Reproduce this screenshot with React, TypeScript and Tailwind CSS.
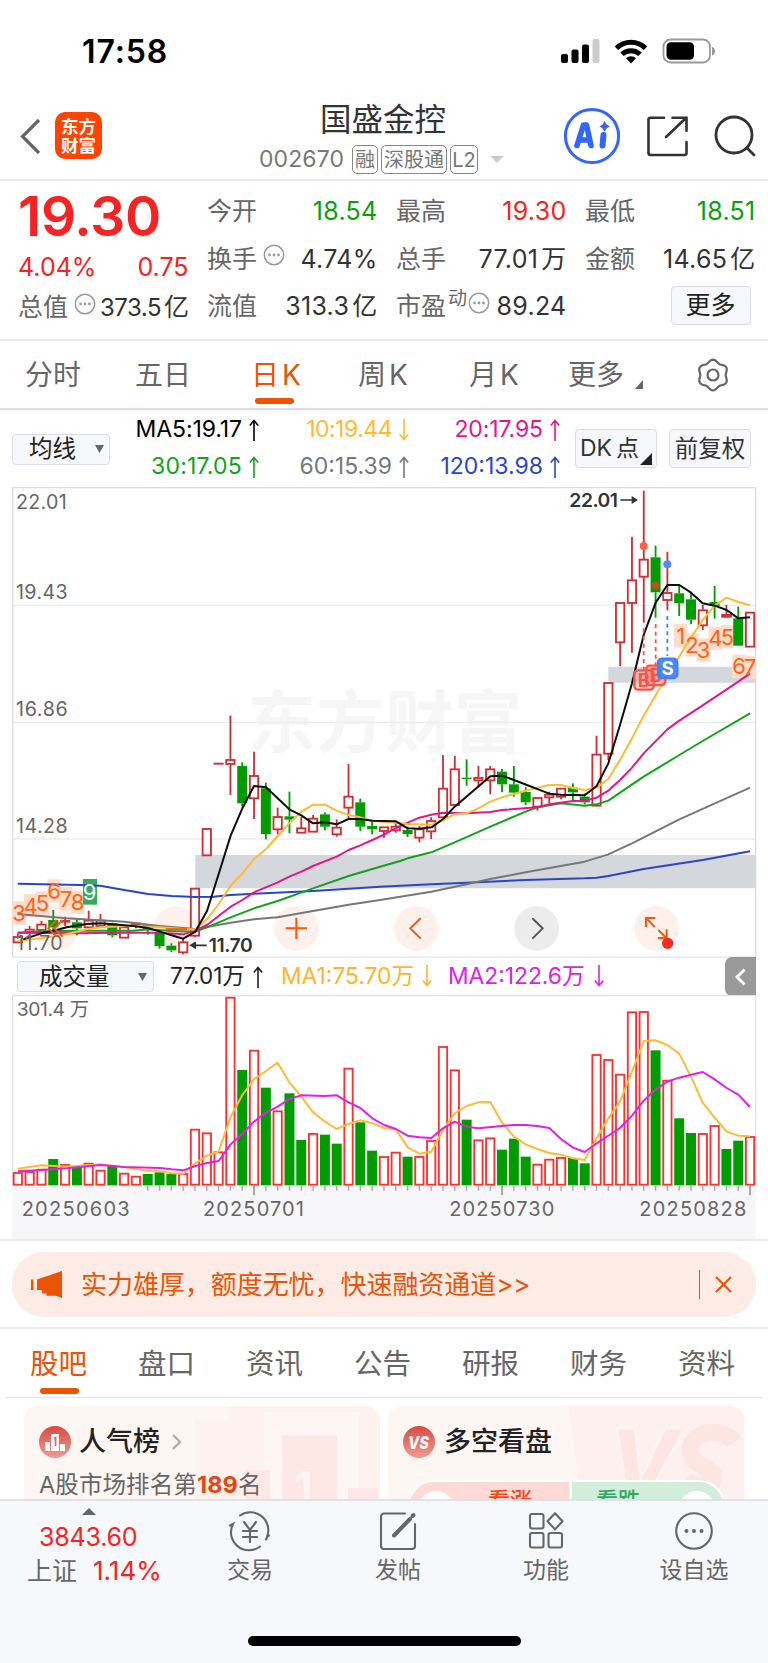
import type { ReactNode } from "react";

type Dir = "r" | "g";
type Pt = [number, number];
// direction, high, body top, body bottom, low
type Candle = [Dir, number, number, number, number];

const RED = "#cf2f33";
const GREEN = "#009c00";

// All chart coordinates are in thirds of a pixel.
const FIRST_X = 53.5;
const STEP = 35.43;
const cx = (i: number) => FIRST_X + i * STEP;

const CANDLES: Candle[] = [
  ["r", 700, 710, 727, 727], ["r", 678, 688, 697, 712], ["r", 663, 673, 690, 690], ["g", 630, 660, 682, 690],
  ["r", 650, 662, 665, 678], ["g", 660, 667, 685, 706], ["r", 632, 661, 682, 688], ["r", 642, 661, 678, 680],
  ["g", 668, 670, 706, 712], ["r", 681, 681, 713, 713], ["r", 668, 670, 673, 685], ["g", 672, 675, 690, 704],
  ["g", 697, 697, 738, 746], ["g", 730, 737, 751, 756], ["r", 715, 726, 757, 763], ["r", 565, 565, 707, 712],
  ["r", 386, 386, 466, 466], ["r", 190, 190, 191, 191], ["r", 47, 179, 192, 285], ["g", 187, 198, 310, 318],
  ["r", 155, 227, 295, 357], ["g", 248, 265, 402, 418], ["r", 323, 350, 388, 403], ["g", 275, 349, 359, 400],
  ["r", 350, 384, 398, 398], ["r", 345, 355, 395, 395], ["g", 337, 343, 380, 391], ["r", 358, 382, 403, 410],
  ["r", 192, 289, 323, 355], ["g", 296, 307, 380, 393], ["g", 365, 378, 388, 403], ["r", 381, 381, 393, 413],
  ["r", 370, 379, 391, 398], ["g", 380, 390, 402, 411], ["r", 378, 387, 413, 427], ["r", 352, 362, 394, 417],
  ["r", 165, 265, 352, 352], ["r", 168, 207, 315, 315], ["g", 178, 233, 237, 257], ["r", 198, 233, 241, 262],
  ["r", 198, 207, 241, 283], ["g", 207, 215, 253, 277], ["g", 198, 253, 278, 290], ["g", 262, 276, 307, 315],
  ["r", 293, 293, 320, 332], ["r", 275, 283, 292, 310], ["r", 265, 265, 290, 298], ["g", 250, 263, 277, 303],
  ["g", 280, 290, 307, 313], ["r", 107, 163, 317, 317], ["r", -52, -52, 161, 180], ["r", -292, -292, -173, -102],
  ["r", -490, -360, -291, -142], ["r", -628, -422, -370, -232], ["g", -463, -428, -323, -247],
  ["r", -445, -322, -300, -269], ["g", -342, -320, -290, -252], ["g", -320, -302, -241, -227],
  ["r", -285, -270, -224, -210], ["g", -342, -294, -282, -244], ["r", -285, -256, -250, -250],
  ["g", -280, -245, -163, -163], ["r", -263, -263, -160, -160],
];

const MA: { color: string; pts: Pt[] }[] = [
  {
    color: "#2b45c8",
    pts: [[53, 551], [240, 555], [300, 557], [373, 570], [444, 582], [515, 588], [586, 591], [640, 590], [692, 585], [762, 581], [939, 573], [1046, 566], [1140, 560], [1294, 553], [1400, 548], [1577, 540], [1754, 535], [1790, 533], [1825, 528], [1931, 507], [2108, 480], [2250, 454]],
  },
  {
    color: "#777",
    pts: [[53, 642], [200, 655], [373, 665], [479, 678], [586, 687], [692, 668], [762, 658], [833, 652], [939, 633], [1046, 614], [1140, 600], [1294, 575], [1400, 553], [1471, 537], [1577, 517], [1754, 485], [1825, 463], [1896, 430], [2038, 358], [2250, 263]],
  },
  {
    color: "#12a31a",
    pts: [[53, 698], [124, 694], [260, 692], [400, 692], [444, 688], [515, 693], [586, 695], [621, 682], [692, 652], [762, 625], [833, 603], [939, 565], [1046, 528], [1117, 507], [1200, 483], [1223, 475], [1294, 457], [1364, 427], [1471, 380], [1577, 335], [1612, 322], [1683, 310], [1754, 317], [1790, 313], [1825, 302], [1931, 230], [2038, 165], [2108, 123], [2250, 40]],
  },
  {
    color: "#e3168c",
    pts: [[53, 698], [240, 700], [340, 698], [480, 698], [550, 703], [586, 692], [621, 675], [656, 648], [692, 620], [727, 600], [762, 577], [833, 547], [868, 530], [904, 515], [939, 498], [1010, 470], [1046, 450], [1081, 436], [1117, 420], [1152, 404], [1188, 384], [1223, 368], [1258, 353], [1294, 344], [1329, 338], [1400, 340], [1471, 336], [1506, 330], [1612, 322], [1648, 313], [1719, 303], [1754, 302], [1790, 293], [1825, 272], [1860, 240], [1896, 203], [1931, 160], [2002, 88], [2038, 62], [2108, 16], [2215, -55], [2250, -80]],
  },
  {
    color: "#ffbb33",
    pts: [[53, 722], [124, 715], [200, 703], [260, 688], [302, 682], [400, 677], [479, 682], [550, 687], [586, 688], [621, 658], [656, 612], [692, 557], [727, 520], [762, 477], [798, 447], [833, 408], [868, 370], [904, 335], [939, 314], [975, 314], [1010, 332], [1046, 345], [1081, 352], [1117, 363], [1188, 368], [1223, 372], [1295, 374], [1329, 362], [1364, 342], [1400, 340], [1435, 325], [1471, 305], [1506, 292], [1577, 272], [1612, 263], [1648, 255], [1683, 255], [1719, 264], [1754, 270], [1790, 263], [1825, 237], [1860, 180], [1896, 115], [1925, 58], [1985, -45], [2020, -100], [2055, -160], [2108, -240], [2144, -283], [2180, -307], [2215, -294], [2250, -284]],
  },
  {
    color: "#0d0d0d",
    pts: [[70, 718], [124, 700], [170, 690], [200, 682], [260, 672], [302, 670], [337, 673], [400, 678], [440, 683], [480, 695], [515, 706], [550, 716], [586, 695], [621, 633], [656, 522], [692, 407], [727, 325], [762, 258], [798, 262], [833, 295], [868, 328], [904, 346], [939, 370], [975, 367], [1010, 373], [1046, 357], [1081, 357], [1117, 362], [1188, 364], [1223, 385], [1258, 386], [1295, 382], [1329, 357], [1364, 320], [1471, 229], [1506, 227], [1542, 240], [1648, 281], [1683, 284], [1754, 286], [1790, 258], [1825, 190], [1860, 75], [1896, -50], [1931, -195], [1967, -292], [2002, -345], [2038, -345], [2073, -322], [2108, -290], [2144, -283], [2180, -270], [2215, -245], [2250, -248]],
  },
];

const VOLUMES: [Dir, number][] = [
  ["r", 667], ["r", 664], ["r", 657], ["g", 627], ["r", 643], ["g", 650], ["r", 639], ["r", 660], ["g", 645],
  ["r", 669], ["r", 678], ["g", 672], ["g", 667], ["g", 672], ["r", 670], ["r", 537], ["r", 548], ["r", 605],
  ["r", 141], ["g", 360], ["r", 300], ["g", 413], ["r", 482], ["g", 430], ["g", 570], ["r", 550], ["g", 554],
  ["g", 581], ["r", 354], ["g", 517], ["g", 602], ["r", 619], ["r", 606], ["g", 620], ["r", 619], ["r", 571],
  ["r", 289], ["r", 359], ["g", 509], ["r", 569], ["r", 563], ["g", 599], ["g", 566], ["g", 620], ["r", 642],
  ["r", 627], ["r", 622], ["g", 624], ["g", 640], ["r", 313], ["r", 328], ["r", 372], ["r", 185], ["r", 184],
  ["g", 301], ["r", 390], ["g", 505], ["g", 549], ["r", 550], ["r", 526], ["g", 597], ["g", 572], ["r", 559],
];

const VOL_MA1: Pt[] = [[53, 656], [124, 646], [200, 650], [302, 643], [373, 652], [444, 662], [480, 664], [515, 670], [550, 671], [586, 640], [621, 617], [656, 605], [692, 500], [727, 435], [762, 388], [798, 363], [833, 338], [868, 397], [904, 440], [939, 487], [975, 515], [1010, 537], [1046, 522], [1081, 511], [1117, 520], [1152, 534], [1188, 539], [1223, 592], [1258, 611], [1294, 605], [1329, 540], [1364, 490], [1400, 468], [1435, 457], [1471, 456], [1506, 518], [1542, 560], [1577, 583], [1612, 597], [1648, 609], [1683, 614], [1719, 625], [1754, 630], [1790, 565], [1825, 505], [1860, 455], [1896, 365], [1931, 273], [1967, 271], [2002, 285], [2037, 310], [2073, 380], [2108, 458], [2144, 503], [2180, 545], [2215, 557], [2250, 559]];
const VOL_MA2: Pt[] = [[53, 664], [124, 660], [200, 655], [302, 645], [373, 651], [480, 654], [515, 658], [550, 661], [586, 648], [621, 639], [656, 633], [692, 583], [727, 552], [762, 515], [798, 488], [833, 470], [868, 447], [904, 436], [975, 438], [1010, 436], [1046, 457], [1081, 474], [1117, 505], [1152, 525], [1188, 537], [1223, 557], [1258, 562], [1294, 564], [1329, 535], [1364, 515], [1400, 530], [1435, 535], [1506, 528], [1542, 525], [1577, 525], [1612, 528], [1648, 534], [1683, 567], [1719, 593], [1754, 606], [1790, 580], [1860, 534], [1896, 497], [1931, 452], [1967, 418], [2002, 395], [2037, 383], [2108, 366], [2144, 388], [2180, 414], [2215, 434], [2250, 471]];

// nine-turn counters: digit, centre x, centre y
const TURNS: [string, number, number][] = [
  ["3", 57, 639], ["4", 92, 617], ["5", 127, 609], ["6", 162, 573], ["7", 198, 596], ["8", 233, 607],
  ["1", 2042, -193], ["2", 2076, -165], ["3", 2111, -150], ["4", 2146, -185], ["5", 2182, -190],
  ["6", 2217, -101], ["7", 2250, -98],
];

const line = (pts: Pt[]) => pts.map((p) => p.join(",")).join(" ");

// six-lobed outline of the settings icon
const GEAR = line(
  Array.from({ length: 72 }, (_, i): Pt => {
    const a = (i * Math.PI) / 36;
    const r = 14 - 1.3 * Math.cos(6 * a);
    return [17 + r * Math.cos(a), 17 + r * Math.sin(a)];
  }),
);

function StatusBar() {
  return (
    <div className="flex h-[90px] items-start justify-between pl-[82px] pr-[52px] pt-[38px]">
      <span className="text-[32px] leading-[28px] font-semibold tracking-[0.900px] text-black">17:58</span>
      <svg className="h-[26px] w-[156px]" viewBox="0 0 156 26">
        <rect x="1" y="16" width="7" height="9" rx="2" />
        <rect x="11.5" y="11.500" width="7" height="13.500" rx="2" />
        <rect x="22" y="6.500" width="7" height="18.500" rx="2" />
        <rect x="32.500" y="1" width="7" height="24" rx="2" fill="#ccc" />
        <g fill="none" stroke="#000" strokeWidth="5">
          <path d="M56.500 10.200a20.500 20.500 0 0 1 29 0" />
          <path d="M62 16.300a13 13 0 0 1 18 0" />
        </g>
        <path d="M66 20.300a7.400 7.400 0 0 1 10 0L71 25.500z" />
        <rect x="103.500" y="1.500" width="46.500" height="23" rx="7" fill="none" stroke="#999" strokeWidth="1.800" />
        <rect x="106.500" y="4.300" width="27.500" height="17.500" rx="4.500" />
        <path d="M152 9c4 1 4 7.500 0 8.500z" fill="#999" />
      </svg>
    </div>
  );
}

function Header() {
  return (
    <header className="flex h-[91px] items-start border-b-2 border-[#ebebeb] pl-[19px]">
      <svg className="mt-[28px] h-[37px] w-[24px]" viewBox="0 0 24 37" fill="none" stroke="#666" strokeWidth="3.200">
        <path d="M20 2 3.500 18.500 20 35" />
      </svg>
      <div className="mt-[22px] ml-3 flex h-[47px] w-[47px] flex-col items-center justify-center rounded-[10px] bg-[#ff4400] text-[17.500px] leading-[19px] font-bold text-white">
        <span>东方</span>
        <span>财富</span>
      </div>
      <div className="ml-[149px] flex w-[264px] flex-col items-center">
        <h1 className="mt-[13px] text-[31.500px] leading-[34px] text-[#333]">国盛金控</h1>
        <div className="mt-[8px] mr-[3px] flex items-center text-[20px] leading-none text-[#777]">
          <span className="w-[87px] text-[23px] tracking-[0.100px]">002670</span>
          <span className="ml-[6px] flex h-[29px] w-[26px] items-center justify-center rounded-[5px] border-[1.500px] border-[#888]">融</span>
          <span className="ml-[3px] flex h-[29px] w-[66px] items-center justify-center rounded-[5px] border-[1.500px] border-[#888]">深股通</span>
          <span className="ml-[3px] flex h-[29px] w-[28px] items-center justify-center rounded-[5px] border-[1.500px] border-[#888] text-[20px]">L2</span>
          <svg className="ml-[12px] h-[7px] w-[14px]" viewBox="0 0 14 7" fill="#ccc">
            <path d="M0 0h14L7 7z" />
          </svg>
        </div>
      </div>
      <svg className="mt-[17px] ml-[48px] h-[58px] w-[58px]" viewBox="0 0 58 58">
        <circle cx="29" cy="29" r="26.600" fill="none" stroke="#3366f8" strokeWidth="3" />
        <g fill="none" stroke="#3366f8" strokeLinejoin="round" strokeLinecap="round">
          <path d="M14 38.500 20.500 18h3l4.500 20.500M18 33h8" strokeWidth="5.600" />
          <path d="M40.500 28l-1 10.500" strokeWidth="6" />
        </g>
        <path d="m41.500 14 2 3.500 3.200 1.700-3.200 2.200-2 3.300-1.800-3.300-3.200-2.200 3.200-1.700z" fill="#3366f8" />
      </svg>
      <svg className="mt-[25px] ml-[25px] h-[42px] w-[42px]" viewBox="0 0 42 42" fill="none" stroke="#333" strokeWidth="2.600" strokeLinecap="round">
        <path d="M18 2.800H4.500a2 2 0 0 0-2 2V38a2 2 0 0 0 2 2h34a2 2 0 0 0 2-2V27" />
        <path d="M20 22 40 3M26.500 2.800h14v13" />
      </svg>
      <svg className="mt-[25px] ml-[26px] h-[42px] w-[42px]" viewBox="0 0 42 42" fill="none" stroke="#333" strokeWidth="2.800" strokeLinecap="round">
        <circle cx="20" cy="20" r="18" />
        <path d="m33 33 7 7" />
      </svg>
    </header>
  );
}

function InfoDot() {
  return (
    <svg className="h-[22px] w-[22px]" viewBox="0 0 22 22">
      <circle cx="11" cy="11" r="9.700" fill="none" stroke="#999" strokeWidth="1.500" />
      <g fill="#999">
        <circle cx="6.500" cy="11" r="1.400" />
        <circle cx="11" cy="11" r="1.400" />
        <circle cx="15.500" cy="11" r="1.400" />
      </g>
    </svg>
  );
}

interface QuoteProps {
  label: string;
  value: string;
  unit?: string;
  tone?: string;
  extra?: ReactNode;
  tight?: boolean;
}

function Quote({ label, value, unit, tone = "text-[#333]", extra, tight }: QuoteProps) {
  return (
    <div className="flex h-[47.500px] items-center whitespace-nowrap">
      <span className="text-[25px] text-[#666]">{label}</span>
      {extra}
      <span className={`ml-auto ${tight ? "text-[24px] tracking-[-0.500px]" : "text-[25px] tracking-[0.300px]"} ${tone}`}>
        {value}
        {unit && <span className="ml-[3px] text-[25px]">{unit}</span>}
      </span>
    </div>
  );
}

function QuotePanel() {
  return (
    <section className="flex h-[160px] gap-[18.500px] border-b-2 border-[#ebebeb] pt-[7px] pl-[18px] leading-none">
      <div className="w-[170.500px]">
        <div className="flex h-[57px] items-center text-[55px] font-semibold tracking-[-0.300px] text-[#f82222]">19.30</div>
        <div className="flex h-[44px] items-center justify-between text-[25px] text-[#f82222]">
          <span>4.04%</span>
          <span>0.75</span>
        </div>
        <div className="-mt-[5px]">
          <Quote tight label="总值" value="373.5" unit="亿" extra={<span className="-mt-2 ml-[6px]"><InfoDot /></span>} />
        </div>
      </div>
      <div className="w-[170.500px]">
        <Quote label="今开" value="18.54" tone="text-[#0aa00a]" />
        <Quote label="换手" value="4.74%" extra={<span className="-mt-2 ml-[6px]"><InfoDot /></span>} />
        <Quote label="流值" value="313.3" unit="亿" />
      </div>
      <div className="w-[170.500px]">
        <Quote label="最高" value="19.30" tone="text-[#f82222]" />
        <Quote label="总手" value="77.01" unit="万" />
        <Quote
          label="市盈"
          value="89.24"
          extra={
            <>
              <span className="-mt-4 ml-[2px] text-[19px] text-[#666]">动</span>
              <span className="-mt-2 ml-[1px]"><InfoDot /></span>
            </>
          }
        />
      </div>
      <div className="w-[170.500px]">
        <Quote label="最低" value="18.51" tone="text-[#0aa00a]" />
        <Quote label="金额" value="14.65" unit="亿" />
        <button className="mt-[2.500px] ml-auto mr-[5px] flex h-[39px] w-[80px] items-center justify-center rounded-[4px] border-[1.500px] border-[#dcdde6] bg-[#f7f8fb] text-[25px] text-[#222]">
          更多
        </button>
      </div>
    </section>
  );
}

function PeriodTabs() {
  return (
    <nav className="flex h-[69px] items-start border-b-2 border-[#dcdce4] pt-[19px] text-[28px] leading-[31px] text-[#666]">
      <span className="ml-[25px] w-[110px]">分时</span>
      <span className="w-[116px]">五日</span>
      <span className="relative w-[107px] text-[#ea5404]">
        日<span className="ml-[3px]">K</span>
        <i className="absolute top-[38px] left-[4px] h-[6px] w-[39px] rounded-full bg-[#ea5404]" />
      </span>
      <span className="w-[111px]">周<span className="ml-[3px]">K</span></span>
      <span className="w-[99px]">月<span className="ml-[3px]">K</span></span>
      <span>更多</span>
      <svg className="mt-[20px] ml-[11px] h-[9px] w-[8px]" viewBox="0 0 8 9" fill="#666">
        <path d="M8 0v9H0z" />
      </svg>
      <svg className="mt-[-2px] ml-[53px] h-[34px] w-[34px]" viewBox="0 0 34 34" fill="none" stroke="#666" strokeWidth="2.200" strokeLinejoin="round">
        <polygon points={GEAR} />
        <circle cx="17" cy="17" r="5.500" />
      </svg>
    </nav>
  );
}

function Arrow({ down = false }: { down?: boolean }) {
  return (
    <svg
      className={`inline-block h-[22px] w-[10px] ${down ? "rotate-180" : ""}`}
      viewBox="0 0 10 22"
      fill="none"
      stroke="currentColor"
      strokeWidth="1.600"
    >
      <path d="M5 22V1.500M.8 6.500 5 1.500l4.200 5" />
    </svg>
  );
}

function MaValue({ text, tone, down }: { text: string; tone: string; down?: boolean }) {
  return (
    <span className={`flex items-center justify-end gap-[7px] ${tone}`}>
      {text}
      <Arrow down={down} />
    </span>
  );
}

function MaRow() {
  return (
    <div className="flex h-[77px] pl-[12px] leading-none">
      <button className="mt-[23.500px] flex h-[31px] w-[98px] items-center rounded-[4px] border-[1.500px] border-[#dcdde6] bg-[#f7f8fb] pl-[16px] text-[23.500px] text-[#222]">
        均线
        <svg className="ml-[19px] h-[8px] w-[9px]" viewBox="0 0 9 8" fill="#666">
          <path d="M0 0h9L4.500 8z" />
        </svg>
      </button>
      <div className="grid w-[450px] grid-cols-[149px_150px_151px] grid-rows-[37px_37px] content-start pt-[1px] text-[23px]">
        <MaValue text="MA5:19.17" tone="text-black tracking-[-0.100px]" />
        <MaValue text="10:19.44" tone="text-[#ffbb33] tracking-[-0.500px]" down />
        <MaValue text="20:17.95" tone="text-[#e3168c] tracking-[-0.100px]" />
        <MaValue text="30:17.05" tone="text-[#12a31a] tracking-[0.200px]" />
        <MaValue text="60:15.39" tone="text-[#777]" />
        <MaValue text="120:13.98" tone="text-[#2b45c8]" />
      </div>
      <button className="relative mt-[19px] ml-[15px] flex h-[39px] w-[82px] items-center rounded-[4px] border-[1.500px] border-[#dcdde6] bg-[#f7f8fb] pl-[4px] text-[23px] text-[#333]">
        DK<span className="ml-[4px]">点</span>
        <svg className="absolute right-[4px] bottom-[2px] h-[12px] w-[12px]" viewBox="0 0 12 12" fill="#222">
          <path d="M12 0v12H0z" />
        </svg>
      </button>
      <button className="mt-[19px] ml-[12px] flex h-[39px] w-[82px] items-center justify-center rounded-[4px] border-[1.500px] border-[#dcdde6] bg-[#f7f8fb] text-[23.500px] text-[#333]">
        前复权
      </button>
    </div>
  );
}

function CandleMark({ index, candle }: { index: number; candle: Candle }) {
  const [dir, high, top, bottom, low] = candle;
  const x = cx(index);
  const color = dir === "r" ? RED : GREEN;
  return (
    <g stroke={color} strokeWidth="5.500">
      {high < top && <path d={`M${x} ${high}V${top}`} />}
      {low > bottom && <path d={`M${x} ${bottom}V${low}`} />}
      {dir === "g" ? (
        <rect x={x - 15} y={top} width="30" height={bottom - top} fill={color} stroke="none" />
      ) : (
        <rect x={x - 12.500} y={top + 1} width="25" height={Math.max(bottom - top - 1, 0.1)} fill="#fff" />
      )}
    </g>
  );
}

function TradeMark({ x, y, letter, kind }: { x: number; y: number; letter: string; kind: "buy" | "sell" }) {
  const buy = kind === "buy";
  return (
    <g>
      <rect
        x={x - 29}
        y={y - 29}
        width="58"
        height="58"
        rx="11"
        fill={buy ? "#ff5b50" : "#3d84f5"}
        fillOpacity={buy ? 0.25 : 0.92}
        stroke={buy ? "#fb5348" : "#3d84f5"}
        strokeWidth="7"
      />
      <text x={x} y={y + 20} textAnchor="middle" fontSize="56" fontWeight="700" fill={buy ? "#fb5348" : "#fff"}>
        {letter}
      </text>
    </g>
  );
}

function PriceChart() {
  return (
    <svg className="block h-[471px] w-[768px]" viewBox="0 -639 2304 1413">
      <text x="742" y="142" fontSize="206" fontWeight="700" fill="#f6f6f7" textLength="825">东方财富</text>
      <g stroke="#ececf3" strokeWidth="4">
        <path d="M38-284H2267M38 67H2267M38 417H2267" />
      </g>
      <path d="M38 772V-637H2267V772" fill="none" stroke="#dcdce4" strokeWidth="4" />
      <path d="M38 771H2267" stroke="#e8e8ec" strokeWidth="4" />
      <path d="M586 465H2266V565H586zM1825-100H2266V-52H1825z" fill="#d4d7dc" />
      <g fill="#fef1ec">
        <circle cx="169" cy="685" r="67" />
        <circle cx="529" cy="685" r="67" />
        <circle cx="889" cy="685" r="67" />
        <circle cx="1249" cy="685" r="67" />
        <circle cx="1970" cy="685" r="67" />
      </g>
      <circle cx="1610" cy="685" r="67" fill="#ececec" />

      {TURNS.map(([, x, y], i) => (
        <rect key={i} x={x - 20} y={y - 35} width={i === 12 ? 37 : 40} height="70" fill="#ffdccb" />
      ))}
      <rect x="249" y="537" width="42" height="77" fill="#36ab5e" />

      {CANDLES.map((c, i) => (
        <CandleMark key={i} index={i} candle={c} />
      ))}
      <rect x="2165" y="-258" width="30" height="10" fill={RED} />

      <g fill="none" strokeWidth="6" strokeLinejoin="round">
        {MA.map((m) => (
          <polyline key={m.color} points={line(m.pts)} stroke={m.color} />
        ))}
      </g>

      <g fill="#ff6410" fontSize="66" textAnchor="middle">
        {TURNS.map(([digit, x, y], i) => (
          <text key={i} x={x} y={y + 24}>{digit}</text>
        ))}
        <text x="269" y="600" fill="#fff">9</text>
      </g>

      <g strokeWidth="5.500" strokeDasharray="12 11">
        <path d="M1931-215V-92M1967-228V-104" stroke="#fb5348" />
        <path d="M2002-252V-132" stroke="#3d84f5" />
      </g>
      <circle cx="1931" cy="-462" r="12" fill="#ff5c4a" />
      <circle cx="1967" cy="-343" r="12" fill="#b5541c" />
      <circle cx="2002" cy="-407" r="12" fill="#4b8df8" />
      <TradeMark x={1932} y={-60} letter="B" kind="buy" />
      <TradeMark x={1967} y={-74} letter="B" kind="buy" />
      <TradeMark x={2003} y={-95} letter="S" kind="sell" />

      <g fill="#666" fontSize="59">
        <text x="48" y="-572" textLength="152">22.01</text>
        <text x="48" y="-304" textLength="155">19.43</text>
        <text x="48" y="49" textLength="155">16.86</text>
        <text x="48" y="399" textLength="155">14.28</text>
        <text x="48" y="751" textLength="140">11.70</text>
      </g>
      <g fill="#333" fontSize="58" fontWeight="600">
        <text x="1708" y="-580" textLength="146">22.01</text>
        <text x="626" y="757" textLength="132">11.70</text>
      </g>
      <g fill="none" stroke="#333" strokeWidth="5">
        <path d="M1861-600H1902M620 736H584" />
      </g>
      <path d="M1914-600 1895-612V-588zM568 736 588 724V748z" fill="#333" />

      <g fill="none" stroke="#f9560a" strokeWidth="6">
        <path d="M170 660 145 685l25 25M188 660l-25 25 25 25M497 688h64" />
        <path d="M857 685h64M889 653v64" />
        <path d="M1262 655 1231 685l31 31" />
        <path d="M1597 655 1628 685l-31 31" stroke="#555" />
        <path d="M1938 681V654H1966M1940 656 1964 681M1974 714H2000V688M1975 690 1999 714" />
      </g>
      <circle cx="2003" cy="730" r="17" fill="#f72a22" />
    </svg>
  );
}

function VolumeHeader() {
  return (
    <div className="flex h-[37px] items-center pl-[17px] text-[22.500px] leading-none">
      <button className="flex h-[31px] w-[137px] items-center rounded-[4px] border-[1.500px] border-[#dcdde6] bg-[#f7f8fb] pl-[21px] text-[23.500px] text-[#222]">
        成交量
        <svg className="ml-[28px] h-[8px] w-[9px]" viewBox="0 0 9 8" fill="#666">
          <path d="M0 0h9L4.500 8z" />
        </svg>
      </button>
      <span className="ml-[16px] flex w-[111px] items-center gap-[8px] text-[#222]">77.01万<Arrow /></span>
      <span className="flex w-[167px] items-center gap-[8px] text-[22.800px] text-[#ffb52e]">MA1:75.70万<Arrow down /></span>
      <span className="flex items-center gap-[9px] text-[22.800px] text-[#e020e8]">MA2:122.6万<Arrow down /></span>
      <span className="mr-[12px] ml-auto flex h-[39px] w-[31px] shrink-0 items-center justify-center rounded-l-[7px] bg-[#999]">
        <svg className="h-[18px] w-[11px]" viewBox="0 0 11 18" fill="none" stroke="#fff" strokeWidth="3">
          <path d="M9.500 1.500 2 9l7.500 7.500" />
        </svg>
      </span>
    </div>
  );
}

function VolumeChart() {
  return (
    <svg className="block h-[244px] w-[768px]" viewBox="0 135 2304 732">
      <rect x="36" y="706" width="2231" height="161" fill="#f7f7fa" />
      <path d="M38 706V137H2267V706" fill="none" stroke="#e2e2e8" strokeWidth="4" />
      {VOLUMES.map(([dir, top], i) =>
        dir === "r" ? (
          <rect key={i} x={cx(i) - 12.500} y={top + 2} width="25" height={702 - top} fill="#fff" stroke="#fb3030" strokeWidth="5.500" />
        ) : (
          <rect key={i} x={cx(i) - 15} y={top} width="30" height={706 - top} fill={GREEN} />
        ),
      )}
      <g fill="none" strokeWidth="6" strokeLinejoin="round">
        <polyline points={line(VOL_MA1)} stroke="#ffbb33" />
        <polyline points={line(VOL_MA2)} stroke="#e020e8" />
      </g>
      {VOLUMES.map((_, i) => {
        const major = i === 20 || i === 41 || i === 62;
        return i > 10 && (
          <path key={i} d={`M${cx(i)} 707V${major ? 735 : 722}`} stroke="#a5a5a8" strokeWidth={major ? 6 : 4} />
        );
      })}
      <g fill="#666" fontSize="60">
        <text x="50" y="197" textLength="217" fontSize="58">301.4 万</text>
        <text x="65" y="798" textLength="324">20250603</text>
        <text x="609" y="798" textLength="303">20250701</text>
        <text x="1348" y="798" textLength="315">20250730</text>
        <text x="1918" y="798" textLength="321">20250828</text>
      </g>
    </svg>
  );
}

function Banner() {
  return (
    <div className="h-[90px] border-y-2 border-[#ebebeb] px-[12px] pt-[11px]">
      <div className="flex h-[65px] items-center rounded-[32px] bg-[#fdece5] pl-[19px] text-[26px] leading-none text-[#ea5404]">
        <svg className="h-[27px] w-[32px]" viewBox="0 0 32 27" fill="#ea5404">
          <path d="M0 8.500h2.500v10.500H0zM6 8.500 31 0v27l-6-2.200h-9.500v-2.300h-4l-1-3.500L6 19z" />
        </svg>
        <span className="ml-[18px] tracking-[-0.050px]">实力雄厚，额度无忧，快速融资通道&gt;&gt;</span>
        <i className="ml-auto h-[29px] w-[1.500px] bg-[#ea5404]" />
        <svg className="mr-[24px] ml-[15px] h-[17px] w-[17px]" viewBox="0 0 17 17" stroke="#ea5404" strokeWidth="2">
          <path d="m1 1 15 15M16 1 1 16" />
        </svg>
      </div>
    </div>
  );
}

const SECTIONS = ["股吧", "盘口", "资讯", "公告", "研报", "财务", "资料"];

function SectionTabs() {
  return (
    <nav className="mx-[6px] flex h-[69px] border-b-[1.500px] border-[#e4e4e4] pt-[19px] text-[28.500px] leading-[32px] text-[#666]">
      {SECTIONS.map((name, i) => (
        <span key={name} className={`relative w-[108px] shrink-0 pl-[24px] ${i === 0 ? "text-[#ea5404]" : ""}`}>
          {name}
          {i === 0 && <i className="absolute top-[40px] left-[34px] h-[6px] w-[39px] rounded-full bg-[#ea5404]" />}
        </span>
      ))}
    </nav>
  );
}

function Cards() {
  return (
    <div className="flex h-[101px] gap-2 overflow-hidden pt-[8px] pl-[24px]">
      <div className="relative h-[120px] w-[356px] shrink-0 overflow-hidden rounded-t-[14px] bg-[#fef6f3]">
        <svg className="absolute inset-0 h-[120px] w-[356px]" viewBox="0 0 356 120">
          <path d="M171 13h34V0h151v120H171z" fill="#fef2ef" />
          <path d="M240 6h95v114h-95z" fill="#fef6f4" />
          <path d="M258 29h55v91h-55zM221 64h25v56h-25zM324 82h30v38h-30z" fill="#fde8e5" />
          <text x="270" y="97" fontSize="44" fontWeight="700" fill="#fef4f2">1</text>
        </svg>
        <div className="relative pt-[19px] pl-[15px] leading-none">
          <div className="flex h-[33px] items-center">
            <svg className="h-[32px] w-[32px]" viewBox="0 0 32 32">
              <defs>
                <linearGradient id="badge" x1="0" y1="0" x2="0" y2="1">
                  <stop offset="0" stopColor="#d84a42" />
                  <stop offset="1" stopColor="#f09a92" />
                </linearGradient>
              </defs>
              <circle cx="16" cy="16" r="16" fill="url(#badge)" />
              <path d="M6 16h5v9H6zM12 8h8v17h-8zM21 18h5v7h-5z" fill="#fff" />
              <path d="M15 12.500l1.500-.8V20" fill="none" stroke="#e0685f" strokeWidth="1.800" />
            </svg>
            <span className="ml-[8px] text-[27px] font-medium text-[#222]">人气榜</span>
            <svg className="ml-[12px] h-[16px] w-[10px]" viewBox="0 0 10 16" fill="none" stroke="#aaa" strokeWidth="2">
              <path d="m1 1 7 7-7 7" />
            </svg>
          </div>
          <p className="mt-[15px] text-[23.500px] tracking-[0.100px] whitespace-nowrap text-[#666]">
            A股市场排名第<b className="font-bold text-[#ea4410]">189</b>名
          </p>
        </div>
      </div>
      <div className="relative h-[120px] w-[356px] shrink-0 overflow-hidden rounded-t-[14px] bg-[#fef6f3]">
        <svg className="absolute inset-0 h-[120px] w-[356px]" viewBox="0 0 356 120">
          <path d="M181 0h175v120H196z" fill="#fef0ee" />
          {/* oversized VS lettering behind the vote bar */}
          <path d="M229 22h18l6 50 24-50h20L256 98h-16z" fill="#fde5e2" stroke="#fef4f2" strokeWidth="3" />
          <path d="M346 36c-6-9-20-12-31-8-14 5-17 20-7 28 8 6 18 7 18 16 0 10-18 11-28 2" fill="none" stroke="#fde5e2" strokeWidth="17" />
        </svg>
        <div className="relative pt-[19px] pl-[15px] leading-none">
          <div className="flex h-[33px] items-center">
            <svg className="h-[32px] w-[32px]" viewBox="0 0 32 32">
              <circle cx="16" cy="16" r="16" fill="url(#badge)" />
              <text x="15.500" y="22.500" textAnchor="middle" fontSize="18" fontWeight="800" fontStyle="italic" fill="#fff" textLength="21" lengthAdjust="spacingAndGlyphs">VS</text>
            </svg>
            <span className="ml-[9px] text-[27px] font-medium text-[#222]">多空看盘</span>
          </div>
          <div className="mt-[22px] ml-[5px] flex h-[52px] w-[317px] overflow-hidden rounded-full border-2 border-white bg-[#d2eedb] text-[22px] leading-none font-medium">
            <div className="relative w-[159px] shrink-0 bg-[#ffdad7] pt-[7px] pl-[78px] text-[#f04a14]">
              看涨
              <i className="absolute top-[9px] left-[8px] h-[36px] w-[36px] rounded-full bg-white" />
            </div>
            <div className="relative w-[156px] border-l-[3px] border-white pt-[7px] pl-[24px] text-[#2faa5c]">
              看跌
              <i className="absolute top-[9px] right-[8px] h-[36px] w-[36px] rounded-full bg-white" />
            </div>
          </div>
        </div>
      </div>
    </div>
  );
}

function BarItem({ label, children }: { label: string; children: ReactNode }) {
  return (
    <div className="flex w-[148px] flex-col items-center pt-[9px]">
      <svg className="h-[42px] w-[44px]" viewBox="0 0 44 42" fill="none" stroke="#666" strokeWidth="2.100" strokeLinecap="round">
        {children}
      </svg>
      <span className="mt-[6px] text-[23px] leading-[24px] text-[#666]">{label}</span>
    </div>
  );
}

function BottomBar() {
  return (
    <footer className="h-[165px] border-t-2 border-[#dfe2e8] bg-[#f7f8fb]">
      <div className="flex h-[135px]">
        <div className="w-[176px] leading-none">
          <svg className="mt-[7px] ml-[82px] h-[7px] w-[14px]" viewBox="0 0 14 7" fill="#666">
            <path d="M7 0l7 7H0z" />
          </svg>
          <div className="mt-[10px] ml-[39px] text-[25px] tracking-[-0.200px] text-[#f82222]">3843.60</div>
          <div className="mt-[8px] ml-[27px] flex items-center text-[25px] text-[#666]">
            上证<span className="ml-[16px] text-[26px] text-[#f82222]">1.14%</span>
          </div>
        </div>
        <BarItem label="交易">
          <path d="M12 5.500A18 18 0 0 1 39 27l2-1.500M39 27l-1 2.500M32 36.500A18 18 0 0 1 5 14l-3 1.500" />
          <path d="m16 12 6 8 6-8M15 21h14M15 27h14M22 20v12" />
        </BarItem>
        <BarItem label="发帖">
          <path d="M29 3.500H8a3 3 0 0 0-3 3V36a3 3 0 0 0 3 3h28a3 3 0 0 0 3-3V14" />
          <path d="M18 25.500 34 9" strokeWidth="4" />
          <path d="m36.500 6 1-1" strokeWidth="4" />
        </BarItem>
        <BarItem label="功能">
          <rect x="6" y="4" width="13.500" height="14.500" rx="2" />
          <rect x="6" y="23" width="13.500" height="14.500" rx="2" />
          <rect x="24.500" y="23" width="13.500" height="14.500" rx="2" />
          <path d="m31 3.200 7.500 8.100L31 19.400l-7.500-8.100z" strokeLinejoin="round" />
        </BarItem>
        <BarItem label="设自选">
          <circle cx="22" cy="21" r="17.800" />
          <g fill="#666" stroke="none">
            <circle cx="14.500" cy="21" r="2" />
            <circle cx="22" cy="21" r="2" />
            <circle cx="29.500" cy="21" r="2" />
          </g>
        </BarItem>
      </div>
      <div className="mx-auto h-[10px] w-[273px] rounded-full bg-black" />
    </footer>
  );
}

export default function App() {
  return (
    <div className="h-[1663px] w-[768px] overflow-hidden bg-white font-[Inter,'Noto_Sans_CJK_SC',sans-serif]">
      <StatusBar />
      <Header />
      <QuotePanel />
      <PeriodTabs />
      <MaRow />
      <PriceChart />
      <VolumeHeader />
      <VolumeChart />
      <Banner />
      <SectionTabs />
      <Cards />
      <BottomBar />
    </div>
  );
}
